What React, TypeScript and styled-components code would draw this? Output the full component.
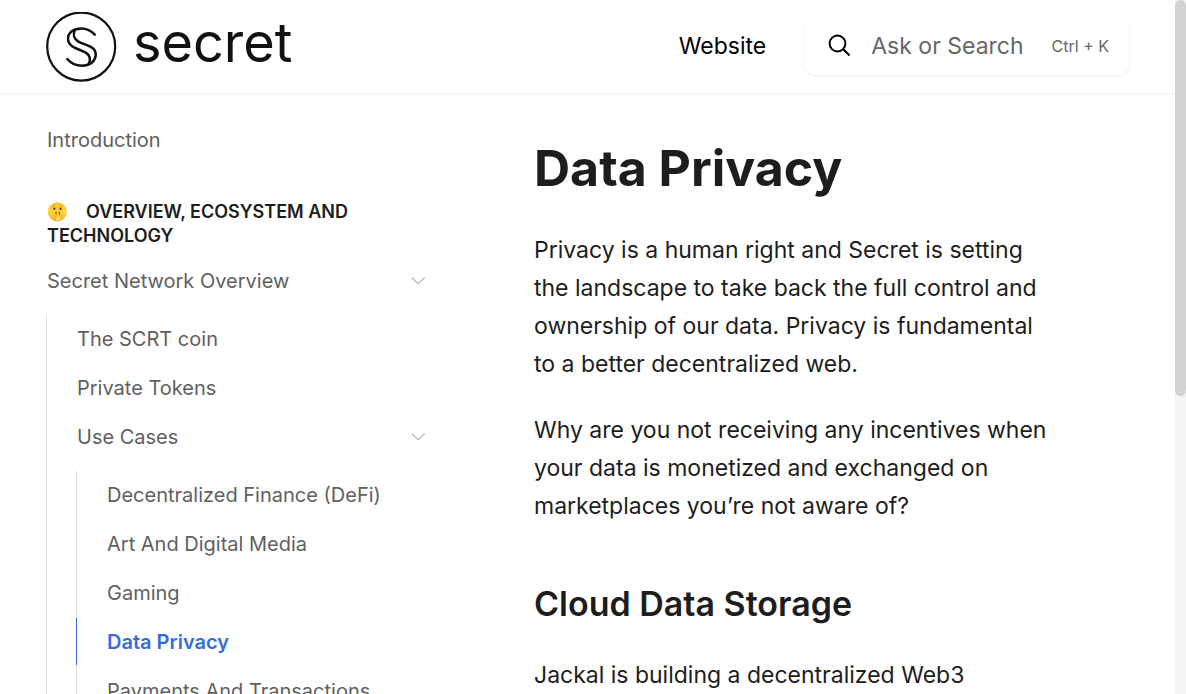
import React from "react";
import styled, { createGlobalStyle } from "styled-components";

const GlobalStyle = createGlobalStyle`
  *, *::before, *::after { box-sizing: border-box; }
  body {
    margin: 0;
    background: #fff;
    color: #1d1d1d;
    font-family: Inter, "Liberation Sans", sans-serif;
  }
  h1, h2, p, ul { margin: 0; padding: 0; }
  ul { list-style: none; }
  a { color: inherit; text-decoration: none; }
`;

const Window = styled.div`
  display: grid;
  grid-template-columns: minmax(0, 1fr) 11px;
  height: 100vh;
  overflow: hidden;
`;

const Page = styled.div`
  display: flex;
  flex-direction: column;
  min-height: 0;
  overflow: hidden;
`;

const ScrollTrack = styled.div`
  background: #f5f5f5;
`;

const ScrollThumb = styled.div`
  height: 57%;
  border-radius: 6px;
  background: #d3d3d3;
`;

const Header = styled.header`
  display: flex;
  flex: none;
  align-items: center;
  justify-content: space-between;
  height: 95px;
  padding: 0 46px;
  border-bottom: 2px solid #f5f5f5;
`;

const Brand = styled.a`
  display: flex;
  align-items: center;
  gap: 16px;
  color: #111;
`;

const Wordmark = styled.span`
  padding-bottom: 8px;
  font-size: 54px;
  line-height: 70px;
`;

const HeaderTools = styled.div`
  display: flex;
  align-items: center;
  gap: 38px;
  padding-bottom: 2px;
`;

const HeaderLink = styled.a`
  color: #000;
  font-size: 23px;
  line-height: 32px;
`;

const SearchButton = styled.button`
  display: flex;
  align-items: center;
  height: 58px;
  padding: 0 20px 0 24px;
  border: 0;
  border-radius: 12px;
  background: #fff;
  box-shadow: 0 1px 3px rgba(0, 0, 0, 0.07);
  color: #666;
  font: inherit;
  font-size: 23px;
  line-height: 32px;
`;

const SearchLabel = styled.span`
  margin: 0 28px 0 20px;
`;

const Shortcut = styled.kbd`
  font-family: inherit;
  font-size: 16px;
`;

const Body = styled.div`
  display: grid;
  flex: 1;
  grid-template-columns: 390px minmax(0, 1fr);
  column-gap: 98px;
  min-height: 0;
  padding: 0 126px 0 46px;
`;

const Sidebar = styled.nav`
  padding-top: 21px;
`;

const NavList = styled.ul<{ $nested?: boolean; $indent?: number }>`
  display: flex;
  flex-direction: column;
  gap: 2px;
  margin-top: ${(p) => (p.$nested ? 11 : 0)}px;
  margin-left: ${(p) => p.$indent ?? 0}px;
  box-shadow: ${(p) => (p.$nested ? "inset 1px 0 #dedede" : "none")};
`;

const NavLink = styled.a<{ $nested?: boolean; $active?: boolean }>`
  display: flex;
  align-items: center;
  justify-content: space-between;
  height: 47px;
  padding: 0 11px 0 ${(p) => (p.$nested ? 30 : 1)}px;
  border-left: ${(p) => (p.$nested ? "1px solid" : "0 solid")};
  border-color: ${(p) => (p.$active ? "#346ddb" : "transparent")};
  color: ${(p) => (p.$active ? "#346ddb" : "#5f5f5f")};
  font-size: 20px;
  font-weight: ${(p) => (p.$active ? 600 : 400)};
  line-height: 28px;
`;

const GroupHeading = styled.h2`
  margin: 37px 0 9px;
  padding-left: 1px;
  font-size: 18px;
  font-weight: 600;
  line-height: 24px;
  text-transform: uppercase;
`;

const EmojiIcon = styled.svg`
  margin-right: 18px;
  vertical-align: -4px;
`;

const Article = styled.main`
  padding-top: 41px;
`;

const Title = styled.h1`
  margin-bottom: 31px;
  font-size: 50px;
  font-weight: 700;
  line-height: 64px;
`;

const Subtitle = styled.h2`
  margin: 55px 0 28px;
  font-size: 34px;
  font-weight: 600;
  line-height: 48px;
`;

const Paragraph = styled.p`
  font-size: 23px;
  line-height: 38px;

  & + & { margin-top: 28px; }
`;

const SecretMark = () => (
  <svg width="71" height="70" viewBox="0 0 71 70" fill="none" stroke="currentColor" aria-hidden="true">
    <circle cx="35.200" cy="34.600" r="34" strokeWidth="2.200" />
    <g strokeWidth="2.500" strokeLinecap="round" strokeLinejoin="round">
      <path d="M48.800 22.600C45 18.500 40.500 16.400 35.500 16.400C27.500 16.400 22 20.500 22 26.500C22 31 24 33.500 28.500 35.700C32 37.400 36.500 38.700 39.800 40.600C44 43.200 45 47.500 42.500 52.300" />
      <path d="M28.800 18.200C26.800 22.500 28 27 32 29.300C36.500 32 42 33 46 35.600C49 37.600 50 40 49.700 43.500C49 49.800 43.500 53.700 36 53.700C30 53.700 25 51.300 21.300 47" />
    </g>
  </svg>
);

const SearchIcon = () => (
  <svg width="23" height="23" viewBox="0 0 23 23" fill="none" stroke="#000" strokeWidth="2" aria-hidden="true">
    <circle cx="9.500" cy="9.500" r="7.900" />
    <path d="M15 15L21.500 21.500" />
  </svg>
);

const Chevron = () => (
  <svg width="14" height="8" viewBox="0 0 14 8" fill="none" stroke="#bdbdbd" strokeWidth="1.400" strokeLinecap="round" strokeLinejoin="round" aria-hidden="true">
    <path d="M1 1L7.200 6.800L13.300 1" />
  </svg>
);

const Shushing = () => (
  <EmojiIcon width="21" height="21" viewBox="0 0 21 21" role="img" aria-label="Shushing face">
    <defs>
      <linearGradient id="face" x1="0" y1="0" x2="0" y2="1">
        <stop offset="0" stopColor="#fbc02c" />
        <stop offset="0.500" stopColor="#ffd43c" />
        <stop offset="1" stopColor="#f7ac1c" />
      </linearGradient>
    </defs>
    <circle cx="10.300" cy="10.800" r="9.500" fill="url(#face)" />
    <ellipse cx="7.400" cy="7.800" rx="1" ry="1.300" fill="#4a300c" />
    <ellipse cx="13.600" cy="7.800" rx="1" ry="1.300" fill="#4a300c" />
    <path d="M5 5.500Q6.500 4 8.300 4.900M12.700 4.900Q14.500 4 16 5.500" stroke="#d99a1a" strokeWidth="0.700" fill="none" />
    <path d="M8.300 12Q9 11.300 9.600 11.400M11.600 11.400Q12.300 11.300 13 12M8.800 13.500H9.500M12 13.500H12.700" stroke="#5f3a10" strokeWidth="1.100" fill="none" />
    <path d="M9.200 19.600C8 18.500 8.500 16.500 10 15.600V12.200Q10.700 11.200 11.400 12.200V15C13.800 15 14.500 17 13.300 19.300Q11.300 20.700 9.200 19.600Z" fill="#ffdf70" stroke="#e89a1b" strokeWidth="0.500" />
  </EmojiIcon>
);

export default function App() {
  return (
    <>
      <GlobalStyle />
      <Window>
        <Page>
          <Header>
            <Brand href="#home">
              <SecretMark />
              <Wordmark>secret</Wordmark>
            </Brand>
            <HeaderTools>
              <HeaderLink href="#website">Website</HeaderLink>
              <SearchButton type="button">
                <SearchIcon />
                <SearchLabel>Ask or Search</SearchLabel>
                <Shortcut>Ctrl + K</Shortcut>
              </SearchButton>
            </HeaderTools>
          </Header>
          <Body>
            <Sidebar>
              <NavLink href="#introduction">Introduction</NavLink>
              <GroupHeading>
                <Shushing />
                Overview, Ecosystem and Technology
              </GroupHeading>
              <NavList>
                <li>
                  <NavLink href="#overview">
                    Secret Network Overview
                    <Chevron />
                  </NavLink>
                  <NavList $nested>
                    <li><NavLink $nested href="#scrt">The SCRT coin</NavLink></li>
                    <li><NavLink $nested href="#tokens">Private Tokens</NavLink></li>
                    <li>
                      <NavLink $nested href="#use-cases">
                        Use Cases
                        <Chevron />
                      </NavLink>
                      <NavList $nested $indent={30}>
                        <li><NavLink $nested href="#defi">Decentralized Finance (DeFi)</NavLink></li>
                        <li><NavLink $nested href="#art">Art And Digital Media</NavLink></li>
                        <li><NavLink $nested href="#gaming">Gaming</NavLink></li>
                        <li><NavLink $nested $active aria-current="page" href="#privacy">Data Privacy</NavLink></li>
                        <li><NavLink $nested href="#payments">Payments And Transactions</NavLink></li>
                      </NavList>
                    </li>
                  </NavList>
                </li>
              </NavList>
            </Sidebar>
            <Article>
              <Title>Data Privacy</Title>
              <Paragraph>
                Privacy is a human right and Secret is setting the landscape to take back the full
                control and ownership of our data. Privacy is fundamental to a better decentralized
                web.
              </Paragraph>
              <Paragraph>
                Why are you not receiving any incentives when your data is monetized and exchanged
                on marketplaces you’re not aware of?
              </Paragraph>
              <Subtitle>Cloud Data Storage</Subtitle>
              <Paragraph>Jackal is building a decentralized Web3</Paragraph>
            </Article>
          </Body>
        </Page>
        <ScrollTrack aria-hidden="true">
          <ScrollThumb />
        </ScrollTrack>
      </Window>
    </>
  );
}
